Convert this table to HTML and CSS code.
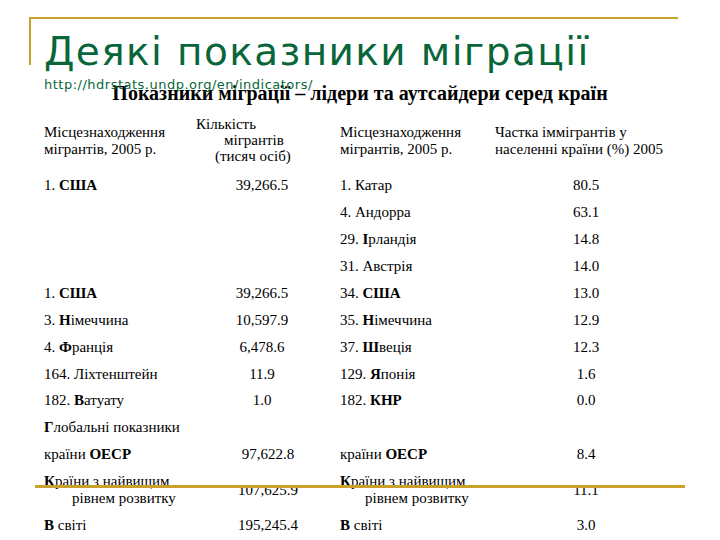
FILE: index.html
```html
<!DOCTYPE html>
<html lang="uk">
<head>
<meta charset="utf-8">
<title>Деякі показники міграції</title>
<link rel="stylesheet" href="styles.css">
</head>
<body>
<div class="slide">
  <div class="frame">
    <h1 class="title">Деякі показники міграції</h1>
    <div class="source">http://hdrstats.undp.org/en/indicators/</div>
  </div>
  <h2 class="heading">Показники міграції – лідери та аутсайдери серед країн</h2>
  <table class="data">
    <colgroup>
      <col class="c1"><col class="c2"><col class="c3"><col class="c4">
    </colgroup>
    <thead>
      <tr>
        <th class="h-text">Місцезнаходження<br>мігрантів, 2005 р.</th>
        <th class="h-count"><span class="l1">Кількість</span><span class="l2">мігрантів</span><span class="l3">(тисяч осіб)</span></th>
        <th class="h-text">Місцезнаходження<br>мігрантів, 2005 р.</th>
        <th class="h-text">Частка іммігрантів у<br>населенні країни (%) 2005</th>
      </tr>
    </thead>
    <tbody>
      <tr><td>1. <b>США</b></td><td class="num">39,266.5</td><td>1. Катар</td><td class="pct">80.5</td></tr>
      <tr><td></td><td class="num"></td><td>4. Андорра</td><td class="pct">63.1</td></tr>
      <tr><td></td><td class="num"></td><td>29. <b>І</b>рландія</td><td class="pct">14.8</td></tr>
      <tr><td></td><td class="num"></td><td>31. Австрія</td><td class="pct">14.0</td></tr>
      <tr><td>1. <b>США</b></td><td class="num">39,266.5</td><td>34. <b>США</b></td><td class="pct">13.0</td></tr>
      <tr><td>3. <b>Н</b>імеччина</td><td class="num">10,597.9</td><td>35. <b>Н</b>імеччина</td><td class="pct">12.9</td></tr>
      <tr><td>4. <b>Ф</b>ранція</td><td class="num">6,478.6</td><td>37. <b>Ш</b>веція</td><td class="pct">12.3</td></tr>
      <tr><td>164. Ліхтенштейн</td><td class="num">11.9</td><td>129. <b>Я</b>понія</td><td class="pct">1.6</td></tr>
      <tr><td>182. <b>В</b>атуату</td><td class="num">1.0</td><td>182. <b>КНР</b></td><td class="pct">0.0</td></tr>
      <tr><td><b>Г</b>лобальні показники</td><td class="num"></td><td></td><td class="pct"></td></tr>
      <tr><td>країни <b>ОЕСР</b></td><td class="num wide">97,622.8</td><td>країни <b>ОЕСР</b></td><td class="pct">8.4</td></tr>
      <tr class="two"><td><b>К</b>раїни з найвищим<span class="indent1">рівнем розвитку</span></td><td class="num wide">107,625.9</td><td><b>К</b>раїни з найвищим<span class="indent3">рівнем розвитку</span></td><td class="pct">11.1</td></tr>
      <tr><td><b>В</b> світі</td><td class="num wide">195,245.4</td><td><b>В</b> світі</td><td class="pct">3.0</td></tr>
    </tbody>
  </table>
  <div class="footer-rule"></div>
</div>
</body>
</html>
```

FILE: styles.css
```css
html, body {
  margin: 0;
  padding: 0;
  background: #ffffff;
}

.slide {
  position: relative;
  width: 720px;
  height: 540px;
  overflow: hidden;
  padding-top: 17px;
  box-sizing: border-box;
  font-family: "Liberation Serif", "Times New Roman", serif;
  color: #000000;
}

.frame {
  position: relative;
  margin-left: 29px;
  width: 647px;
  height: 46px;
  border-top: 2px solid #c9a12a;
  border-left: 2px solid #c9a12a;
}

.title {
  margin: 0;
  padding: 14px 0 0 13px;
  font-family: "DejaVu Sans", Verdana, sans-serif;
  font-weight: normal;
  font-size: 39px;
  line-height: 38px;
  letter-spacing: 1.4px;
  color: #08663a;
  white-space: nowrap;
}

.source {
  position: absolute;
  left: 13px;
  top: 58px;
  font-family: "DejaVu Sans", Verdana, sans-serif;
  font-size: 13px;
  line-height: 15px;
  letter-spacing: 0.5px;
  color: #08663a;
  white-space: nowrap;
}

.heading {
  margin: 17px 0 0 0;
  font-family: "Liberation Serif", "Times New Roman", serif;
  font-weight: bold;
  font-size: 20px;
  line-height: 22px;
  text-align: center;
  white-space: nowrap;
}

.data {
  margin-left: 44px;
  width: 633px;
  table-layout: fixed;
  border-collapse: collapse;
  font-size: 15px;
  line-height: 17px;
}

.c1 { width: 152px; }
.c2 { width: 144px; }
.c3 { width: 155px; }
.c4 { width: 182px; }

.data th {
  font-weight: normal;
  text-align: left;
  vertical-align: top;
  padding: 20.4px 0 0 0;
  white-space: nowrap;
}

.data th.h-count {
  padding: 12.4px 0 8.1px 0;
  line-height: 16px;
}

.h-count span {
  display: block;
}

.h-count .l2 { padding-left: 28px; }
.h-count .l3 { padding-left: 19px; }

.data td {
  padding: 4.95px 0;
  height: 17px;
  white-space: nowrap;
  vertical-align: middle;
}

.data td.num {
  text-align: center;
  padding-right: 12px;
}

.data td.num.wide {
  padding-right: 0;
}

.data td.pct {
  text-align: center;
}

.indent1,
.indent3 {
  display: block;
}

.indent1 { padding-left: 28px; }
.indent3 { padding-left: 25px; }

.footer-rule {
  position: absolute;
  left: 35px;
  top: 485px;
  width: 650px;
  height: 3px;
  background: #c9a12a;
}
```
